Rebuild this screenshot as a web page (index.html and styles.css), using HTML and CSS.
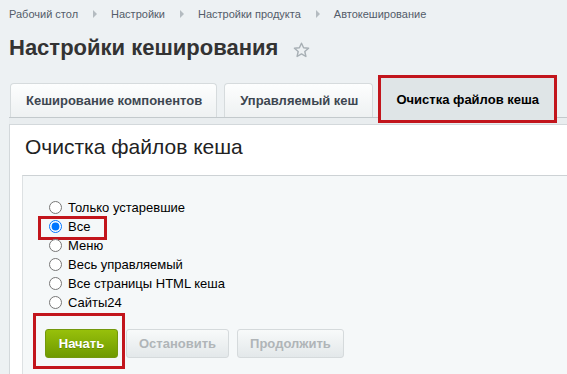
FILE: index.html
```html
<!DOCTYPE html>
<html lang="ru">
<head>
    <meta charset="UTF-8">
    <meta name="viewport" content="width=device-width, initial-scale=1.0">
    <title>Настройки кеширования</title>
    <link rel="stylesheet" href="styles.css">
</head>
<body>
    <nav class="breadcrumbs">
        <a href="#">Рабочий стол</a>
        <span class="crumb-arrow"></span>
        <a href="#">Настройки</a>
        <span class="crumb-arrow"></span>
        <a href="#">Настройки продукта</a>
        <span class="crumb-arrow"></span>
        <a href="#">Автокеширование</a>
    </nav>

    <h1 class="page-title">
        Настройки кеширования
        <svg class="star" width="17" height="16" viewBox="0 0 17 16">
            <path d="M8.5 1.2 L10.6 5.7 L15.6 6.2 L11.8 9.5 L12.9 14.5 L8.5 11.9 L4.1 14.5 L5.2 9.5 L1.4 6.2 L6.4 5.7 Z" fill="none" stroke="#a7afb4" stroke-width="1.4" stroke-linejoin="round"/>
        </svg>
    </h1>

    <div class="tabs">
        <div class="tab">Кеширование компонентов</div>
        <div class="tab">Управляемый кеш</div>
        <div class="tab tab-active">Очистка файлов кеша</div>
    </div>

    <section class="panel">
        <h2 class="panel-title">Очистка файлов кеша</h2>
        <div class="panel-body">
            <form class="options">
                <label class="option"><input type="radio" name="clear"> Только устаревшие</label>
                <label class="option marked"><input type="radio" name="clear" checked> Все</label>
                <label class="option"><input type="radio" name="clear"> Меню</label>
                <label class="option"><input type="radio" name="clear"> Весь управляемый</label>
                <label class="option"><input type="radio" name="clear"> Все страницы HTML кеша</label>
                <label class="option"><input type="radio" name="clear"> Сайты24</label>
            </form>
            <div class="actions">
                <span class="marked-btn"><button class="btn btn-green">Начать</button></span>
                <button class="btn" disabled>Остановить</button>
                <button class="btn" disabled>Продолжить</button>
            </div>
        </div>
    </section>
</body>
</html>
```

FILE: styles.css
```css
body {
    margin: 0;
    padding: 0;
    background: #edf1f3;
    font-family: "Liberation Sans", Arial, sans-serif;
    color: #000;
    overflow: hidden;
}
.breadcrumbs {
    display: flex;
    align-items: center;
    padding: 7px 9px 0;
    font-size: 11px;
    line-height: 14px;
}
.breadcrumbs a {
    color: #535c69;
    text-decoration: none;
}
.crumb-arrow {
    width: 0;
    height: 0;
    border-left: 4px solid #b4bbc0;
    border-top: 4px solid transparent;
    border-bottom: 4px solid transparent;
    margin: 0 14px 0 15px;
}
.page-title {
    margin: 14px 0 0 9px;
    font-size: 22px;
    line-height: 26px;
    font-weight: bold;
    color: #333;
    display: flex;
    align-items: center;
}
.star {
    margin-left: 15px;
    margin-top: 4px;
}
.tabs {
    display: flex;
    align-items: flex-end;
    gap: 7px;
    margin-top: 17px;
    padding-left: 10px;
}
.tab {
    height: 33px;
    padding: 0 14px 0 15px;
    display: flex;
    align-items: center;
    font-size: 13px;
    font-weight: bold;
    color: #3d4650;
    background: linear-gradient(#fdfefe, #eef1f2);
    border: 1px solid #d6dbdd;
    border-bottom: none;
    border-radius: 4px 4px 0 0;
}
.tab-active {
    position: relative;
    z-index: 1;
    height: 42px;
    margin-left: 1px;
    margin-bottom: -3px;
    padding: 0 15px 0 15px;
    color: #000;
    background: #dfe5e7;
    border: none;
    border-radius: 0;
    outline: 3px solid #c2151c;
}
.panel {
    border-top: 1px solid #c3c9cc;
    background: #e9edef;
    padding-top: 6px;
    margin-left: 9px;
}
.panel-title {
    margin: 0;
    background: #fff;
    border-top: 1px solid #d3d8db;
    border-left: 1px solid #d3d8db;
    padding: 10px 0 16px 15px;
    font-size: 21px;
    line-height: 24px;
    font-weight: normal;
    color: #222;
}
.panel-body {
    background: #fff;
    border-left: 1px solid #d3d8db;
    padding-left: 12px;
    height: 200px;
}
.options,
.actions {
    background: #f5f8f9;
}
.options {
    border-top: 1px solid #cdd2d5;
    border-left: 1px solid #dde1e3;
    padding: 22px 0 0 26px;
    display: flex;
    flex-direction: column;
    align-items: flex-start;
}
.option {
    position: relative;
    display: flex;
    align-items: center;
    height: 19px;
    font-size: 13px;
}
.option input {
    margin: 0 6px 0 0;
    width: 13px;
    height: 13px;
}
.marked::after {
    content: "";
    position: absolute;
    top: -1px;
    bottom: -4px;
    left: -11px;
    right: -17px;
    border: 3px solid #c2151c;
}
.actions {
    border-left: 1px solid #dde1e3;
    display: flex;
    gap: 8px;
    padding: 17px 0 30px 22px;
}
.marked-btn {
    position: relative;
    display: flex;
}
.marked-btn::after {
    content: "";
    position: absolute;
    top: -16px;
    bottom: -11px;
    left: -12px;
    right: -7px;
    border: 3px solid #c2151c;
}
.btn {
    height: 29px;
    padding: 0 12px;
    font-family: inherit;
    font-size: 13px;
    font-weight: bold;
    color: #b0b5b8;
    background: linear-gradient(#f8fafa, #e3e8ea);
    border: 1px solid #d5dadc;
    border-radius: 3px;
}
.btn-green {
    width: 73px;
    color: #fff;
    text-shadow: 0 1px 0 rgba(0, 0, 0, 0.2);
    background: linear-gradient(#97c00b, #6f9a00);
    border: 1px solid #73980c;
    cursor: pointer;
}
```
